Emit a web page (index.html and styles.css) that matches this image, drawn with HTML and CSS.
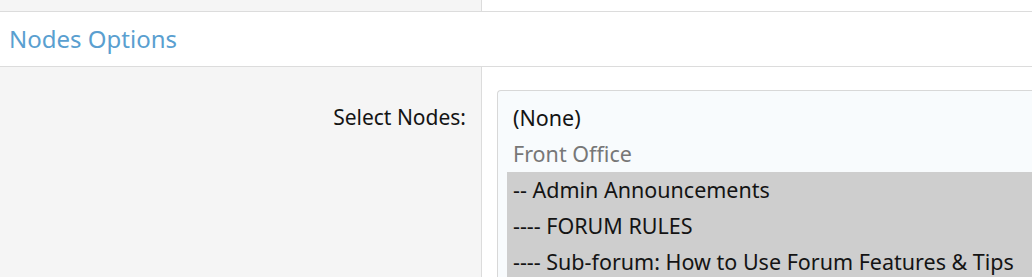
FILE: index.html
```html
<!DOCTYPE html>
<html>
<head>
    <title>Nodes Options</title>
    <link rel="stylesheet" href="styles.css">
</head>
<body>
    <div class="form-row form-row-top">
        <div class="row-label"></div>
        <div class="row-input"></div>
    </div>

    <h3 class="block-header">Nodes Options</h3>

    <div class="form-row form-row-main">
        <div class="row-label">
            <label for="nodes">Select Nodes:</label>
        </div>
        <div class="row-input">
            <div class="node-select" id="nodes">
                <div class="node-option">(None)</div>
                <div class="node-option node-category">Front Office</div>
                <div class="node-option selected">-- Admin Announcements</div>
                <div class="node-option selected">---- FORUM RULES</div>
                <div class="node-option selected">---- Sub-forum: How to Use Forum Features &amp; Tips</div>
            </div>
        </div>
    </div>
</body>
</html>
```
FILE: styles.css
```css
body {
    margin: 0;
    font-family: "Noto Sans", "Open Sans", sans-serif;
    color: #141414;
    background: #fff;
    height: 277px;
    overflow: hidden;
}

.form-row {
    display: flex;
    border-bottom: 1px solid #dcdcdc;
}

.form-row-top {
    height: 11px;
}

.row-label {
    flex-shrink: 0;
    width: 482px;
    box-sizing: border-box;
    background-color: #f5f5f5;
    border-right: 1px solid #dcdcdc;
    text-align: right;
    padding: 0 15px 0 0;
    font-size: 21px;
    line-height: 30px;
}

.row-input {
    flex: 1;
    padding: 23px 0 0 15px;
}

.block-header {
    margin: 0;
    height: 55px;
    box-sizing: border-box;
    padding: 12px 9px 0;
    font-size: 24px;
    line-height: 30px;
    font-weight: normal;
    color: #5a9fd0;
    border-bottom: 1px solid #dcdcdc;
}

.form-row-main {
    height: 210px;
    overflow: hidden;
}

.form-row-main .row-label {
    padding-top: 35px;
}

.node-select {
    border: 1px solid #d8d8d8;
    border-right: none;
    border-radius: 4px 0 0 0;
    background-color: #f8fbfd;
    padding: 9px 0 0 9px;
    height: 200px;
    font-size: 21.5px;
}

.node-option {
    height: 36px;
    line-height: 36px;
    padding-left: 6px;
    white-space: nowrap;
}

.node-category {
    color: #777;
}

.node-option.selected {
    background-color: #cecece;
}
```
